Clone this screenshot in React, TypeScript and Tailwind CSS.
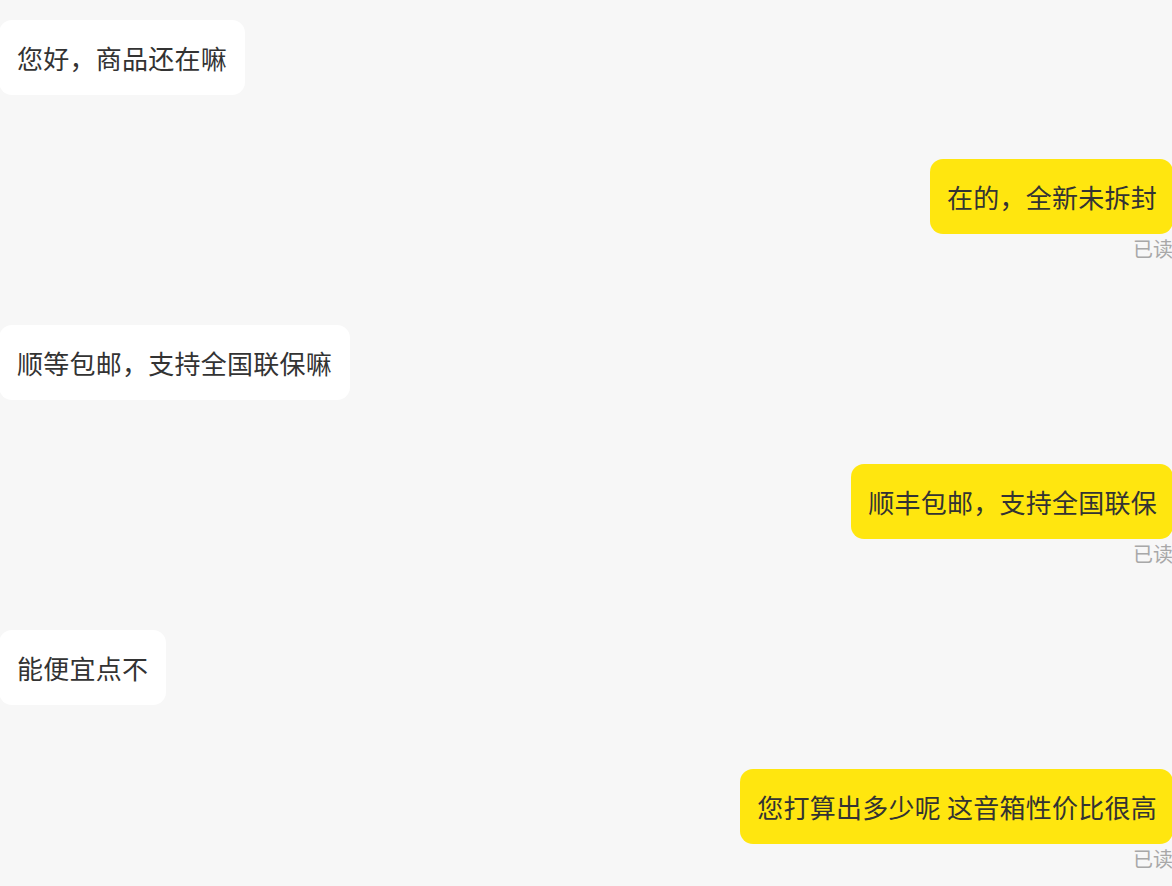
import React from "react";

type Msg = { from: "them" | "me"; text: string; read?: boolean };

const messages: Msg[] = [
  { from: "them", text: "您好，商品还在嘛" },
  { from: "me", text: "在的，全新未拆封", read: true },
  { from: "them", text: "顺等包邮，支持全国联保嘛" },
  { from: "me", text: "顺丰包邮，支持全国联保", read: true },
  { from: "them", text: "能便宜点不" },
  { from: "me", text: "您打算出多少呢 这音箱性价比很高", read: true },
];

const font = {
  fontFamily: '"Microsoft YaHei", "Noto Sans CJK SC", "Noto Sans", sans-serif',
};

function Bubble({ msg }: { msg: Msg }) {
  const mine = msg.from === "me";
  return (
    <div className={mine ? "flex flex-col items-end" : "flex flex-col items-start"}>
      <div
        className={
          mine
            ? "rounded-[13px] bg-[#ffe60f] pl-[17px] pr-[16px] py-[19px] text-[26px] leading-[37px] tracking-[0.25px] text-[#333333] whitespace-pre"
            : "rounded-[13px] bg-white px-[18px] py-[19px] text-[26px] leading-[37px] tracking-[0.25px] text-[#333333] whitespace-pre"
        }
      >
        {msg.text}
      </div>
      {msg.read && (
        <div className="mt-[3px] text-[20px] leading-[24px] text-[#a8a8a8]">已读</div>
      )}
    </div>
  );
}

export default function App() {
  return (
    <div className="w-[1172px] h-[886px] overflow-hidden bg-[#f7f7f7]" style={font}>
      <div className="ml-[-1px] mr-[-1px] pt-[20px] flex flex-col gap-[64px]">
        {messages.map((m, i) => (
          <Bubble key={i} msg={m} />
        ))}
      </div>
    </div>
  );
}
